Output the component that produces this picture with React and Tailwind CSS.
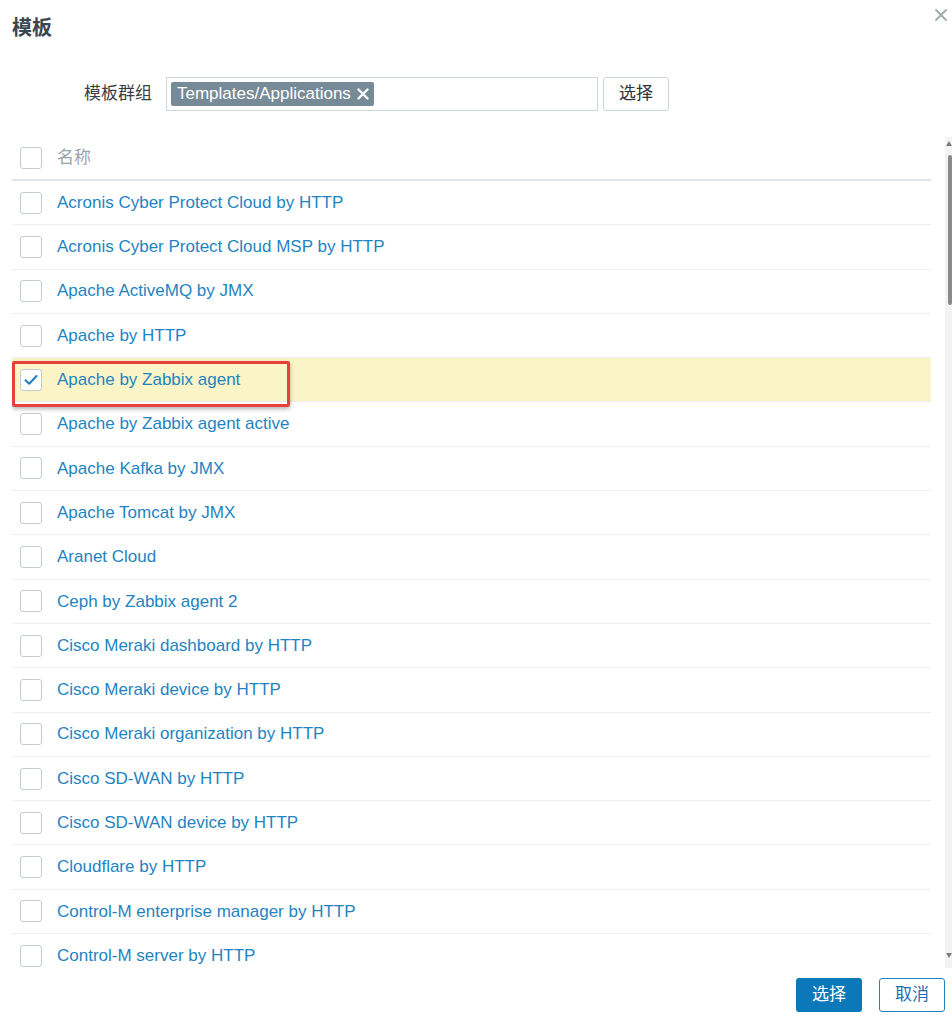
import React from "react";

const items = [
  "Acronis Cyber Protect Cloud by HTTP",
  "Acronis Cyber Protect Cloud MSP by HTTP",
  "Apache ActiveMQ by JMX",
  "Apache by HTTP",
  "Apache by Zabbix agent",
  "Apache by Zabbix agent active",
  "Apache Kafka by JMX",
  "Apache Tomcat by JMX",
  "Aranet Cloud",
  "Ceph by Zabbix agent 2",
  "Cisco Meraki dashboard by HTTP",
  "Cisco Meraki device by HTTP",
  "Cisco Meraki organization by HTTP",
  "Cisco SD-WAN by HTTP",
  "Cisco SD-WAN device by HTTP",
  "Cloudflare by HTTP",
  "Control-M enterprise manager by HTTP",
  "Control-M server by HTTP",
];

function Box({ checked }) {
  return (
    <div className="w-[22px] h-[22px] shrink-0 rounded-[3px] border border-[#c3ccd3] bg-white flex items-center justify-center">
      {checked && (
        <svg width="14" height="12" viewBox="0 0 14 12" fill="none">
          <path d="M1.5 6.2 L5.2 9.8 L12.5 2" stroke="#1f7fc0" strokeWidth="2" strokeLinecap="round" strokeLinejoin="round" />
        </svg>
      )}
    </div>
  );
}

export default function App() {
  return (
    <div
      className="relative w-[952px] h-[1024px] bg-white overflow-hidden flex flex-col"
      style={{ fontFamily: '"Liberation Sans", Arial, "Noto Sans CJK SC", sans-serif' }}
    >
      {/* title */}
      <div className="flex items-start justify-between pl-[12px] pt-[16px] h-[62px]">
        <div className="text-[20px] leading-[24px] font-bold text-[#3b4650]">模板</div>
        <div className="pr-[3px] -mt-[9px]">
          <svg width="16" height="16" viewBox="0 0 16 16">
            <path d="M3 3 L13 13 M13 3 L3 13" stroke="#a4adb4" strokeWidth="2" strokeLinecap="round" />
          </svg>
        </div>
      </div>

      {/* form row */}
      <div className="flex items-center h-[34px] mt-[15px]">
        <div className="w-[152px] text-right text-[17px] text-[#3a3f44]">模板群组</div>
        <div className="ml-[14px] w-[432px] h-[34px] border border-[#cfd6db] flex items-center pl-[4px]">
          <div className="h-[24px] bg-[#768b97] rounded-[2px] text-white text-[17px] flex items-center pl-[6px] pr-[5px] gap-[6px]">
            <span>Templates/Applications</span>
            <svg width="12" height="12" viewBox="0 0 12 12">
              <path d="M1.5 1.5 L10.5 10.5 M10.5 1.5 L1.5 10.5" stroke="#ffffff" strokeWidth="2.4" strokeLinecap="round" />
            </svg>
          </div>
        </div>
        <div className="ml-[5px] w-[66px] h-[34px] border border-[#cdd5da] rounded-[3px] flex items-center justify-center text-[17px] text-[#2f3438]">
          选择
        </div>
      </div>

      {/* list area */}
      <div className="mt-[26px] h-[831px] flex">
        <div className="relative w-[919px] ml-[12px] overflow-hidden">
          <div className="h-[44px] flex items-center border-b-2 border-[#dfe5e9] pl-[8px]">
            <Box />
            <span className="ml-[15px] text-[17px] text-[#9aa3aa]">名称</span>
          </div>
          {items.map((name, i) => (
            <div
              key={name}
              className={`h-[44.3px] flex items-center border-b border-[#eceff1] pl-[8px] ${
                i === 4 ? "bg-[#fbf4c6]" : ""
              }`}
            >
              <Box checked={i === 4} />
              <span className="ml-[15px] text-[17px] text-[#1f84c2]">{name}</span>
            </div>
          ))}
          {/* annotation */}
          <div className="absolute left-0 top-[224px] w-[278px] h-[46px] border-[3px] border-[#e8403b] rounded-[2px] shadow-[0_2px_4px_rgba(0,0,0,0.3)]" />
        </div>
        {/* scrollbar */}
        <div className="ml-[14px] w-[7px] bg-[#f3f3f3] flex flex-col items-center">
          <svg width="6" height="5" viewBox="0 0 6 5" className="mt-[4px]">
            <path d="M0 5 L3 0 L6 5 Z" fill="#7d7d7d" />
          </svg>
          <div className="mt-[9px] ml-[2px] w-[4px] h-[150px] bg-[#8a8a8a] rounded-[2px]" />
          <div className="flex-1" />
          <svg width="6" height="5" viewBox="0 0 6 5" className="mb-[10px]">
            <path d="M0 0 L6 0 L3 5 Z" fill="#7d7d7d" />
          </svg>
        </div>
      </div>

      {/* footer */}
      <div className="flex justify-end gap-[17px] pr-[7px] mt-[10px]">
        <div className="w-[66px] h-[34px] bg-[#0c77b9] rounded-[3px] flex items-center justify-center text-white text-[17px]">
          选择
        </div>
        <div className="w-[66px] h-[34px] border border-[#1f84c2] rounded-[3px] flex items-center justify-center text-[#1f6fa8] text-[17px]">
          取消
        </div>
      </div>
    </div>
  );
}
